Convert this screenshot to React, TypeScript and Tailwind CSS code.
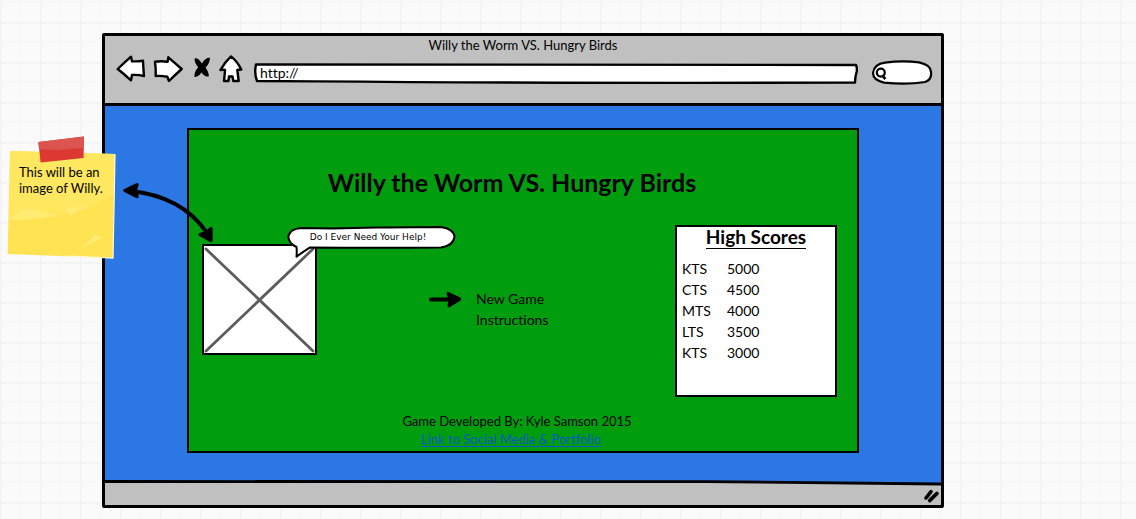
import type { ReactNode } from "react";

const scores = [
  { player: "KTS", score: 5000 },
  { player: "CTS", score: 4500 },
  { player: "MTS", score: 4000 },
  { player: "LTS", score: 3500 },
  { player: "KTS", score: 3000 },
];

function NavButton({ label, width, children }: { label: string; width: number; children: ReactNode }) {
  return (
    <button type="button" aria-label={label} className="shrink-0">
      <svg
        width={width}
        height="30"
        viewBox={`0 0 ${width} 30`}
        fill="white"
        stroke="black"
        strokeWidth="2.4"
        strokeLinejoin="round"
        strokeLinecap="round"
        className="block"
      >
        {children}
      </svg>
    </button>
  );
}

function Toolbar() {
  return (
    <header className="border-b-3 border-black bg-[#c0c0c0] pb-4">
      <h1 className="text-center text-[13px] leading-[18px]">Willy the Worm VS. Hungry Birds</h1>
      <div className="flex h-[33px] items-start pr-2 pl-[9px]">
        <div className="flex gap-[6px]">
          <NavButton label="Back" width={32}>
            <path d="M3.7 15 Q10 9 17 2.7 L18 7.3 Q24 7.6 29 6.7 Q29.3 14 30 22 Q24 20.6 18 21 L17 26.3 Q10 20 3.7 15Z" />
          </NavButton>
          <NavButton label="Forward" width={32}>
            <path d="M3 7.7 Q9 6.8 15.7 7.7 L16.3 3.3 Q23 9 29.7 15 Q23 21 17 27 L15.3 22.7 Q9 21.6 3.7 22 Q4 15 3 7.7Z" />
          </NavButton>
          <NavButton label="Stop" width={22}>
            <path
              d="M4.6 4.4 Q8 3.4 12 9.4 Q15 3.6 20 3.8 Q20 9 15.6 13.6 Q18.6 18 19 22 Q15.6 24 11.4 18.6 Q8 23.6 4.4 22.8 Q4 18 8.2 13.2 Q4.4 9 4.6 4.4Z"
              fill="black"
              stroke="none"
            />
          </NavButton>
          <NavButton label="Home" width={26}>
            <path d="M13 2.4 Q7 8 2.4 16 Q5 15.6 7 16 Q6.6 22 6 27 L10.5 27 L11 22.5 L14.5 22.5 L15.3 27 L20.7 27 Q20 21 19.3 16 L23.3 15.5 Q19 7 13 2.4Z" />
          </NavButton>
        </div>
        <div className="relative mt-[9px] ml-[10px] h-[21px] flex-1">
          <svg
            className="absolute inset-0 h-full w-full"
            viewBox="0 0 603 21"
            preserveAspectRatio="none"
            fill="white"
            stroke="black"
            strokeWidth="2.4"
            strokeLinejoin="round"
            aria-hidden="true"
          >
            <path d="M2 1.4 Q300 0.8 601 2 Q602.4 5 601.6 9 Q600 14 600 19.6 Q300 20.4 60 18.4 L3 18 Q0 10 2 1.4Z" />
          </svg>
          <input
            type="text"
            aria-label="Address"
            defaultValue="http://"
            className="relative block h-5 w-full bg-transparent px-[6px] text-[14px] leading-5 outline-none"
          />
        </div>
        <div className="relative mt-[6px] ml-[13px] h-[25px] w-[62px] shrink-0">
          <svg
            className="absolute inset-0"
            width="62"
            height="25"
            viewBox="0 0 62 25"
            fill="white"
            stroke="black"
            strokeWidth="2.2"
            aria-hidden="true"
          >
            <path d="M14 2.6 Q32 0.4 48 2.4 Q60 5 60 12 Q61 20 54 22 Q36 25 13 22.6 Q2 20 2 13 Q3 4 14 2.6Z" />
            <circle cx="9.8" cy="12.6" r="4" />
            <path d="M11 15.4 L14.4 19" strokeWidth="2.6" />
          </svg>
          <input
            type="search"
            aria-label="Search"
            className="relative block h-[25px] w-full bg-transparent pr-2 pl-[18px] text-[13px] leading-5 outline-none"
          />
        </div>
      </div>
    </header>
  );
}

function WillyImage() {
  return (
    <div className="relative mt-[19px] h-[111px] w-[115px] shrink-0 border-2 border-black bg-white">
      <svg className="block h-full w-full" viewBox="0 0 111 107" stroke="#5c5c5c" strokeWidth="2.8" strokeLinecap="round" aria-hidden="true">
        <path d="M2 3 L109 105 M109 3 L2 105" />
      </svg>
      <div className="absolute -top-[21px] left-[83px] flex h-[34px] w-[170px] justify-center">
        <svg
          className="absolute inset-0"
          width="170"
          height="34"
          viewBox="0 0 170 34"
          fill="white"
          stroke="black"
          strokeWidth="2"
          strokeLinejoin="round"
          aria-hidden="true"
        >
          <path d="M14 3 Q50 4 90 2.6 Q130 2 154 2 Q167 4 167.5 12 Q166 21 154 22.4 Q90 23 23 22.4 Q16 27 9.5 31.6 Q10 26 9.5 22 Q1 18 1.4 11 Q3 4 14 3Z" />
        </svg>
        <p className="relative pr-2 font-['DejaVu_Sans',sans-serif] text-[9px] leading-[25px] whitespace-nowrap">
          Do I Ever Need Your Help!
        </p>
      </div>
    </div>
  );
}

function GameMenu() {
  return (
    <nav className="flex w-[134px] gap-[15px] pt-[63px]">
      <svg width="32" height="22" viewBox="0 0 32 22" className="shrink-0" stroke="black" strokeLinejoin="round" strokeLinecap="round" aria-hidden="true">
        <path d="M2 11.5 L22 11.5" strokeWidth="4" />
        <path d="M19 5.4 L31 11 L20 18 L21 11Z" strokeWidth="3" />
      </svg>
      <div className="flex flex-col items-start text-[14px] leading-[21px]">
        <button type="button">New Game</button>
        <button type="button">Instructions</button>
      </div>
    </nav>
  );
}

function HighScores() {
  return (
    <section className="h-[172px] w-[162px] shrink-0 border-2 border-black bg-white">
      <h3 className="text-center text-[19px] leading-5 font-bold">
        <span className="border-b border-black">High Scores</span>
      </h3>
      <table aria-label="High Scores" className="mt-[11px] ml-[5px] text-left text-[14px] leading-[21px]">
        <tbody>
          {scores.map((row, i) => (
            <tr key={i}>
              <th scope="row" className="w-[45px] p-0 font-normal">{row.player}</th>
              <td className="p-0">{row.score}</td>
            </tr>
          ))}
        </tbody>
      </table>
    </section>
  );
}

function StickyNote() {
  return (
    <aside className="absolute top-[134px] left-[6px] h-[126px] w-[111px]">
      <svg className="absolute inset-0" width="111" height="126" viewBox="0 0 111 126" aria-hidden="true">
        <path d="M4 17 L109 20 L107 124 L1.6 120Z" fill="#ffe352" />
        <path d="M4 17 L109 20 L108.4 60 Q80 78 50 82 Q30 86 3 86Z" fill="#ffe75f" />
        <path d="M3 86 Q20 68 38 78 Q46 80 50 82 Q30 86 3 86Z M60 74 L80 72 L64 82Z M90 100 L74 115 L96 104Z" fill="#ffec70" />
        <path d="M109 20 L108 75 L107 124 L60 122" fill="none" stroke="#fffbd6" strokeWidth="1.2" />
        <path d="M32.4 8 L78 2.4 L77.6 24 L34.6 28.6Z" fill="#de3833" />
        <path d="M32.4 8 L78 2.4 L77.8 14 L50 16 L33 15Z" fill="#dc5450" />
      </svg>
      <p className="relative pt-[30px] pl-[13px] text-[13px] leading-4">
        This will be an
        <br />
        image of Willy.
      </p>
    </aside>
  );
}

function NoteArrow() {
  return (
    <svg
      className="absolute top-[180px] left-[120px]"
      width="98"
      height="66"
      viewBox="0 0 98 66"
      fill="black"
      stroke="black"
      strokeLinejoin="round"
      strokeLinecap="round"
      aria-hidden="true"
    >
      <path d="M10 11 Q62 16 87 53" fill="none" strokeWidth="4" />
      <path d="M5 10.6 L17 4.8 L15.4 10 L17 16.6Z" strokeWidth="3.4" />
      <path d="M91 60.4 L80 54.6 L86 53 L91 48.6Z" strokeWidth="3.4" />
    </svg>
  );
}

function StatusBar() {
  return (
    <div className="relative flex h-[25px] justify-end">
      <svg className="absolute inset-0 h-full w-full" viewBox="0 0 836 25" preserveAspectRatio="none" aria-hidden="true">
        <path d="M0 1.5 Q420 1 600 1.6 Q720 2.4 836 4 L836 25 L0 25Z" fill="#c0c0c0" />
        <path d="M0 1.5 Q420 1 600 1.6 Q720 2.4 836 4" fill="none" stroke="black" strokeWidth="2.8" />
      </svg>
      <svg className="relative mt-1" width="20" height="21" viewBox="0 0 20 21" stroke="black" strokeLinecap="round" strokeWidth="3.6" aria-hidden="true">
        <path d="M5 14 L10 7.6 M8.6 16.6 L16 9.4" />
      </svg>
    </div>
  );
}

export default function App() {
  return (
    <div className="relative min-h-screen bg-[#fafafa] bg-[linear-gradient(to_right,#f4f4f4_2px,transparent_2px),linear-gradient(to_bottom,#f4f4f4_2px,transparent_2px),linear-gradient(to_right,#f6f6f6_1px,transparent_1px),linear-gradient(to_bottom,#f6f6f6_1px,transparent_1px)] bg-size-[40px_40px,40px_40px,20px_20px,20px_20px] bg-position-[0px_22px] pt-[33px] pr-48 pb-[11px] pl-[102px] font-['Lato','Liberation_Sans',sans-serif] text-black [font-variant-ligatures:none]">
      <div className="rounded-xs border-3 border-black bg-[#2b78e4]">
        <Toolbar />
        <main className="px-[82px] pt-[22px] pb-[27px]">
          <section className="border-2 border-black bg-[#009e0f] pb-[3px]">
            <h2 className="pt-9 pr-[22px] text-center text-[25px] leading-8 font-bold">Willy the Worm VS. Hungry Birds</h2>
            <div className="mt-[27px] flex justify-between pr-5 pl-[13px]">
              <WillyImage />
              <GameMenu />
              <HighScores />
            </div>
            <footer className="mt-[15px] pr-3 text-center text-[13px] leading-[18px]">
              <p>Game Developed By: Kyle Samson 2015</p>
              <p className="pr-3">
                <a href="#portfolio" className="text-[#0b55c4] underline underline-offset-2">
                  Link to Social Media &amp; Portfolio
                </a>
              </p>
            </footer>
          </section>
        </main>
        <StatusBar />
      </div>
      <NoteArrow />
      <StickyNote />
    </div>
  );
}
